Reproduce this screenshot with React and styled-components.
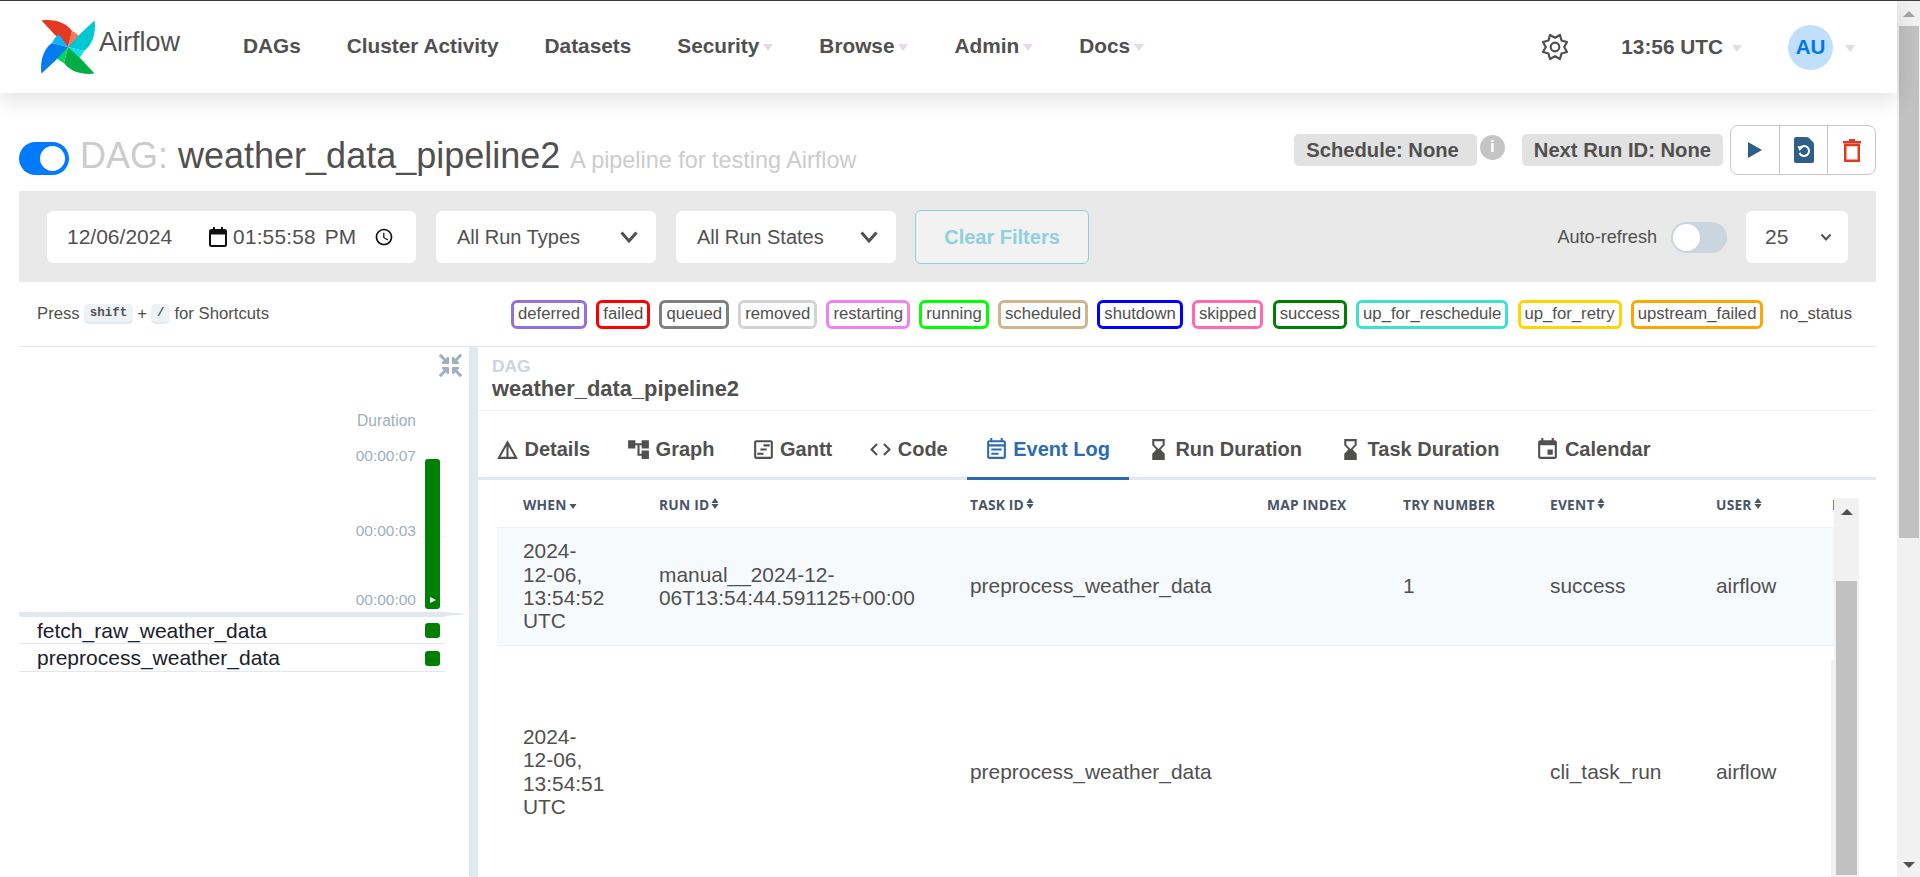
import React from 'react'
import styled, { createGlobalStyle } from 'styled-components'
import { FaCompressArrowsAlt } from 'react-icons/fa'
import {
  MdDetails, MdAccountTree, MdOutlineViewTimeline, MdCode, MdOutlineEventNote,
  MdHourglassBottom, MdEvent, MdAccessTime,
} from 'react-icons/md'

const GlobalStyle = createGlobalStyle`
  html, body { margin: 0; padding: 0; height: 100%; overflow: hidden; background: #fff; }
  * { box-sizing: border-box; }
  body { font-family: "Liberation Sans", Arial, sans-serif; color: #51504f; }
`
const Page = styled.div`
  display: flex;
  height: 877px;
  border-top: 1px solid #3c3c3c;
  overflow: hidden;
`
const Main = styled.div`
  flex: 1;
  min-width: 0;
  display: flex;
  flex-direction: column;
`
const PageBar = styled.div`
  width: 23px;
  background: #f1f1f1;
  display: flex;
  flex-direction: column;
  align-items: center;
`
const ArrowBox = styled.div`
  height: ${p => p.$h}px;
  display: flex;
  align-items: center;
  justify-content: center;
  flex: none;
  margin-top: ${p => (p.$end ? 'auto' : '0')};
`
const Arrow = styled.span`
  width: 0;
  height: 0;
  border-left: 6px solid transparent;
  border-right: 6px solid transparent;
  ${p => (p.$down ? 'border-top' : 'border-bottom')}: 6px solid ${p => p.$color};
`
const PageThumb = styled.div`
  width: 20px;
  height: 512px;
  background: #c1c1c1;
`
const Nav = styled.header`
  height: 92px;
  flex: none;
  background: #fff;
  display: flex;
  align-items: center;
  padding: 0 42px 0 41px;
  box-shadow: 0 6px 22px rgba(0,0,0,.13);
  position: relative;
  z-index: 2;
`
const Brand = styled.div`
  display: flex;
  align-items: center;
  width: 202px;
  flex: none;
  font-size: 27px;
  color: #51504f;
  & > span { margin: -9px 0 0 4px; }
`
const NavLinks = styled.nav`
  display: flex;
  gap: 46px;
  align-items: center;
  margin-top: -2px;
`
const NavLink = styled.a`
  font-size: 20.8px;
  font-weight: 700;
  color: #51504f;
  display: flex;
  align-items: center;
`
const Caret = styled.i`
  width: 0;
  height: 0;
  margin: 3px 0 0 4px;
  border-left: 5.5px solid transparent;
  border-right: 5.5px solid transparent;
  border-top: 7px solid #e4dae9;
`
const NavRight = styled.div`
  margin-left: auto;
  display: flex;
  align-items: center;
`
const GearSvg = styled.svg`
  margin-right: 52px;
  flex: none;
`
const Clock = styled(NavLink)`
  margin-right: 46px;
  & > i { margin-left: 9px; }
`
const Avatar = styled.div`
  width: 45px;
  height: 45px;
  border-radius: 50%;
  background: #bfdffb;
  color: #0077ee;
  font-size: 20.6px;
  font-weight: 700;
  display: flex;
  align-items: center;
  justify-content: center;
  margin-right: 8px;
`
const TitleRow = styled.div`
  height: 98px;
  flex: none;
  display: flex;
  align-items: flex-end;
  justify-content: space-between;
  padding: 0 21px 16px 19px;
`
const TitleLeft = styled.div`
  display: flex;
  align-items: flex-end;
`
const Toggle = styled.div`
  width: ${p => p.$w}px;
  height: ${p => p.$h}px;
  border-radius: ${p => p.$h / 2}px;
  background: ${p => p.$bg};
  padding: ${p => p.$pad}px;
  display: flex;
  justify-content: ${p => (p.$on ? 'flex-end' : 'flex-start')};
  flex: none;
  &::after {
    content: '';
    height: 100%;
    aspect-ratio: 1;
    border-radius: 50%;
    background: #fff;
  }
`
const Heading = styled.h1`
  margin: 0 0 -6px 11px;
  font-size: 36px;
  line-height: 41px;
  font-weight: 400;
  color: #51504f;
  white-space: nowrap;
`
const Muted = styled.span`
  color: #ccc;
`
const Subtitle = styled.small`
  font-size: 23.4px;
  color: #ccc;
  margin-left: 10px;
`
const TitleRight = styled.div`
  display: flex;
  align-items: center;
`
const InfoBadge = styled.span`
  height: 32px;
  padding: 0 ${p => p.$pr ?? 12}px 0 12px;
  display: flex;
  align-items: center;
  border-radius: 5px;
  background: #e2e2e2;
  font-size: 20.2px;
  font-weight: 700;
  color: #51504f;
  white-space: nowrap;
`
const InfoDot = styled.span`
  width: 25px;
  height: 25px;
  margin: -6px 17px 0 3px;
  border-radius: 50%;
  background: #c4c4c4;
  color: #fff;
  font-size: 17px;
  font-weight: 700;
  display: flex;
  align-items: center;
  justify-content: center;
`
const ButtonGroup = styled.div`
  display: flex;
  margin-left: 7px;
  height: 50px;
  border: 1px solid #c9c9c9;
  border-radius: 8px;
`
const GroupButton = styled.div`
  width: 48px;
  display: flex;
  align-items: center;
  justify-content: center;
  & + & { border-left: 1px solid #c9c9c9; }
`
const FilterBar = styled.div`
  height: 91px;
  flex: none;
  margin: 0 21px 0 19px;
  padding: 1px 28px 0;
  background: #e9e9e9;
  display: flex;
  align-items: center;
  gap: 20px;
`
const Field = styled.div`
  width: ${p => p.$w}px;
  height: 52px;
  flex: none;
  background: #fff;
  border-radius: 6px;
  display: flex;
  align-items: center;
  padding: 0 ${p => p.$pr ?? 18}px 0 ${p => p.$pl ?? 21}px;
  font-size: 20px;
  color: #51504f;
`
const DateText = styled.span`
  font-size: 21px;
  white-space: nowrap;
`
const CalendarSvg = styled.svg`
  margin-left: 37px;
  flex: none;
`
const TimeText = styled(DateText)`
  font-size: 20.8px;
  word-spacing: 3px;
  margin-left: 6px;
  letter-spacing: .2px;
`
const ClockIcon = styled(MdAccessTime)`
  margin-left: auto;
  color: #111;
`
const Chevron = styled.svg`
  margin-left: auto;
  flex: none;
`
const ClearButton = styled.div`
  width: 174px;
  height: 54px;
  flex: none;
  margin-left: -1px;
  border: 1px solid #8fd0de;
  border-radius: 6px;
  background: #f2f2f2;
  color: #8fd0de;
  font-size: 20px;
  font-weight: 700;
  display: flex;
  align-items: center;
  justify-content: center;
`
const RefreshGroup = styled.div`
  margin-left: auto;
  display: flex;
  align-items: center;
  font-size: 18.1px;
  color: #51504f;
  gap: 14px;
  & > div:last-child { margin-left: 5px; }
`
const LegendRow = styled.div`
  height: 65px;
  flex: none;
  margin: 0 21px 0 19px;
  padding: 0 17px 0 18px;
  border-bottom: 1px solid #e2e8f0;
  display: flex;
  align-items: center;
  font-size: 16.7px;
`
const Shortcut = styled.div`
  display: flex;
  align-items: center;
  gap: 4.5px;
`
const Kbd = styled.kbd`
  height: 20px;
  padding: 0 5.5px;
  display: flex;
  align-items: center;
  border-radius: 5px;
  background: #edf2f7;
  border-bottom: 2px solid #e2e8f0;
  font-family: "Liberation Mono", monospace;
  font-size: 12.5px;
  font-weight: 700;
  color: #51504f;
`
const Legend = styled.div`
  margin-left: auto;
  display: flex;
  gap: 9.2px;
`
const StateBadge = styled.span`
  height: 29px;
  padding: 0 4px;
  border: 3px solid ${p => p.$color};
  border-radius: 6px;
  display: flex;
  align-items: center;
  color: #51504f;
`
const Workspace = styled.div`
  flex: 1;
  min-height: 0;
  margin: 0 21px 0 19px;
  display: flex;
  overflow: hidden;
`
const LeftPanel = styled.aside`
  width: 450px;
  flex: none;
  display: flex;
  flex-direction: column;
`
const CollapseRow = styled.div`
  height: 31px;
  padding: 7px 7px 0 0;
  display: flex;
  justify-content: flex-end;
  color: #a0aec0;
`
const DurationLabel = styled.div`
  width: 397px;
  margin-top: 34px;
  line-height: 18px;
  font-size: 15.6px;
  color: #a0aec0;
  text-align: right;
`
const Axis = styled.div`
  position: relative;
  width: 426px;
  margin-top: 17px;
  height: 165px;
`
const TickRow = styled.div`
  display: flex;
  justify-content: flex-end;
  height: 18px;
  margin-top: ${p => p.$gap}px;
  font-size: 15.5px;
  line-height: 18px;
  color: #a0aec0;
`
const TickLine = styled.i`
  width: 24px;
  height: 1px;
  margin: 14px 0 0 5px;
  background: #edf2f7;
`
const DurationBar = styled.div`
  position: absolute;
  top: 12px;
  right: 5px;
  width: 15px;
  height: 150px;
  border-radius: 3px;
  background: #008000;
  display: flex;
  align-items: flex-end;
  justify-content: center;
  padding-bottom: 6px;
  &::after {
    content: '';
    margin-left: 1px;
    border-left: 6px solid #fff;
    border-top: 3.5px solid transparent;
    border-bottom: 3.5px solid transparent;
  }
`
const ChartRule = styled.div`
  position: relative;
  width: 426px;
  height: 5px;
  flex: none;
  background: #e2e8f0;
  &::after {
    content: '';
    position: absolute;
    left: 100%;
    top: 0;
    border-left: 23px solid #e2e8f0;
    border-top: 2.5px solid transparent;
    border-bottom: 2.5px solid transparent;
  }
`
const TaskRow = styled.div`
  width: 426px;
  height: ${p => p.$h}px;
  padding: 1px 5px 0 18px;
  border-bottom: 1px solid #e2e8f0;
  display: flex;
  align-items: center;
  justify-content: space-between;
  font-size: 21px;
  color: #1a202c;
  &::after {
    content: '';
    width: 15px;
    height: 15px;
    border-radius: 3px;
    background: #008000;
  }
`
const Splitter = styled.div`
  width: 9px;
  flex: none;
  background: #e2e8f0;
`
const RightPanel = styled.section`
  flex: 1;
  min-width: 0;
  display: flex;
  flex-direction: column;
`
const PanelHeader = styled.div`
  height: 64px;
  flex: none;
  padding: 10px 0 0 14px;
  border-bottom: 1px solid #edf2f7;
`
const Crumb = styled.div`
  font-size: 17.4px;
  font-weight: 700;
  line-height: 19px;
  color: #cbd5e0;
`
const CrumbName = styled.div`
  font-size: 21.9px;
  font-weight: 700;
  line-height: 26px;
  color: #51504f;
`
const Tabs = styled.div`
  height: 69px;
  flex: none;
  display: flex;
  border-bottom: 3px solid #e2e8f0;
`
const Tab = styled.div`
  height: 69px;
  padding: 13px 19px 3px 17px;
  display: flex;
  align-items: center;
  gap: 4.5px;
  font-size: 20px;
  font-weight: 700;
  color: ${p => (p.$active ? '#2b6cb0' : '#51504f')};
  border-bottom: 3px solid ${p => (p.$active ? '#2b6cb0' : 'transparent')};
  white-space: nowrap;
`
const TableArea = styled.div`
  flex: 1;
  min-height: 0;
  display: flex;
  padding-left: 19px;
`
const TableClip = styled.div`
  width: 1337px;
  flex: none;
  overflow: hidden;
`
const Table = styled.table`
  width: 1365px;
  table-layout: fixed;
  border-collapse: collapse;
`
const Th = styled.th`
  height: 47px;
  padding: 3px 0 0 26px;
  text-align: left;
  border-bottom: 1px solid #edf2f7;
  font-family: "Open Sans", sans-serif;
  font-size: 13.8px;
  font-weight: 700;
  color: #4a5568;
  white-space: nowrap;
  letter-spacing: .2px;
`
const Td = styled.td`
  padding: 0 0 0 26px;
  font-size: 20.9px;
  line-height: 23.4px;
  color: #51504f;
  vertical-align: middle;
`
const Tr = styled.tr`
  height: ${p => p.$h}px;
  background: ${p => (p.$tint ? '#f7fafc' : '#fff')};
  border-bottom: 1px solid #edf2f7;
`
const WhenText = styled.div`
  width: 82px;
`
const RunText = styled.div`
  width: 263px;
`
const SortIcon = styled.svg`
  margin-left: 2px;
  vertical-align: 1px;
`
const InnerBar = styled.div`
  position: relative;
  width: 25px;
  flex: none;
  margin-top: 18px;
  background: #f1f1f1;
  display: flex;
  flex-direction: column;
  align-items: center;
  &::before {
    content: '';
    position: absolute;
    left: -3px;
    width: 3px;
    top: 162px;
    bottom: 0;
    background: #f1f1f1;
  }
`
const InnerThumb = styled.div`
  width: 21px;
  height: 294px;
  margin-top: 55px;
  background: #c1c1c1;
`

function AirflowLogo() {
  const blades = [
    ['#e43921', '#ff7557', 0],
    ['#00c7d4', '#11e1ee', 90],
    ['#00ad46', '#04d659', 180],
    ['#017cee', '#0cb6ff', 270],
  ]
  return (
    <svg width="54" height="54" viewBox="0 0 54 54">
      {blades.map(([dark, light, turn]) => (
        <g key={turn} transform={`rotate(${turn} 27 27)`}>
          <path d="M0.5 0.5C10 -1 24 1 31 11L27 27L14 15Z" fill={dark} />
          <path d="M31 11C35 13 38 15 39.500 18L27 27Z" fill={light} />
        </g>
      ))}
    </svg>
  )
}

function GearIcon() {
  // eight teeth, set a half step off the vertical
  const points = Array.from({ length: 16 }, (_, i) => {
    const angle = ((i * 22.5 + 22.5) * Math.PI) / 180
    const r = i % 2 === 0 ? 13 : 9.2
    return `${(14 + r * Math.sin(angle)).toFixed(2)},${(14 - r * Math.cos(angle)).toFixed(2)}`
  })
  return (
    <GearSvg width="28" height="28" viewBox="0 0 28 28" fill="none" stroke="#51504f" strokeWidth="2.2" strokeLinejoin="round">
      <polygon points={points.join(' ')} />
      <circle cx="14" cy="14" r="4.300" />
    </GearSvg>
  )
}

function Sort({ only }) {
  return (
    <SortIcon width="8" height="11" viewBox="0 0 8 11" fill="#4a5568">
      {!only && <path d="M4 0L7.500 5H0.500Z" />}
      <path d="M4 11L7.500 6H0.500Z" />
    </SortIcon>
  )
}

function SelectChevron() {
  return (
    <Chevron width="18" height="12" viewBox="0 0 18 12" fill="none" stroke="#51504f" strokeWidth="3">
      <path d="M1.500 1.500L9 10L16.500 1.500" />
    </Chevron>
  )
}

const states = [
  ['deferred', '#9370db'], ['failed', '#ff0000'], ['queued', '#808080'], ['removed', '#d3d3d3'],
  ['restarting', '#ee82ee'], ['running', '#00ff00'], ['scheduled', '#d2b48c'], ['shutdown', '#0000ff'],
  ['skipped', '#ff69b4'], ['success', '#008000'], ['up_for_reschedule', '#40e0d0'],
  ['up_for_retry', '#ffd700'], ['upstream_failed', '#ffa500'], ['no_status', 'transparent'],
]

const tabs = [
  ['Details', MdDetails],
  ['Graph', MdAccountTree],
  ['Gantt', MdOutlineViewTimeline],
  ['Code', MdCode],
  ['Event Log', MdOutlineEventNote, true],
  ['Run Duration', MdHourglassBottom],
  ['Task Duration', MdHourglassBottom],
  ['Calendar', MdEvent],
]

export default function App() {
  return (
    <Page>
      <GlobalStyle />
      <Main>
        <Nav>
          <Brand>
            <AirflowLogo />
            <span>Airflow</span>
          </Brand>
          <NavLinks>
            <NavLink>DAGs</NavLink>
            <NavLink>Cluster Activity</NavLink>
            <NavLink>Datasets</NavLink>
            <NavLink>Security<Caret /></NavLink>
            <NavLink>Browse<Caret /></NavLink>
            <NavLink>Admin<Caret /></NavLink>
            <NavLink>Docs<Caret /></NavLink>
          </NavLinks>
          <NavRight>
            <GearIcon />
            <Clock>13:56 UTC<Caret /></Clock>
            <Avatar>AU</Avatar>
            <Caret />
          </NavRight>
        </Nav>

        <TitleRow>
          <TitleLeft>
            <Toggle $w={50} $h={33} $bg="#007bff" $pad={4} $on />
            <Heading>
              <Muted>DAG: </Muted>weather_data_pipeline2
              <Subtitle>A pipeline for testing Airflow</Subtitle>
            </Heading>
          </TitleLeft>
          <TitleRight>
            <InfoBadge $pr={18}>Schedule: None</InfoBadge>
            <InfoDot>i</InfoDot>
            <InfoBadge>Next Run ID: None</InfoBadge>
            <ButtonGroup>
              <GroupButton>
                <svg width="14" height="16" viewBox="0 0 14 16"><path d="M0 0L14 8L0 16Z" fill="#2f5f88" /></svg>
              </GroupButton>
              <GroupButton>
                <svg width="20" height="26" viewBox="0 0 20 26">
                  <path d="M2 0H12Q14 0 15 1L19 5Q20 6 20 8V24Q20 26 18 26H2Q0 26 0 24V2Q0 0 2 0Z" fill="#2f5f88" />
                  <path d="M6 11A5 5 0 1 1 5.500 16" fill="none" stroke="#fff" strokeWidth="2" />
                  <path d="M3.500 9L9.500 10L5.500 14Z" fill="#fff" />
                </svg>
              </GroupButton>
              <GroupButton>
                <svg width="18" height="23" viewBox="0 0 18 23">
                  <path d="M6 0H12V2H18V4.500H0V2H6Z" fill="#e43921" />
                  <rect x="2.250" y="6" width="13.500" height="15.750" fill="none" stroke="#e43921" strokeWidth="2.500" />
                </svg>
              </GroupButton>
            </ButtonGroup>
          </TitleRight>
        </TitleRow>

        <FilterBar>
          <Field $w={369} $pl={20} $pr={22}>
            <DateText>12/06/2024</DateText>
            <CalendarSvg width="18" height="20" viewBox="0 0 18 20" fill="none" stroke="#111" strokeWidth="2">
              <rect x="1" y="3" width="16" height="16" rx="1.500" />
              <path d="M1 5.500H17" strokeWidth="4" />
              <path d="M5 0V3M13 0V3" />
            </CalendarSvg>
            <TimeText>01:55:58 PM</TimeText>
            <ClockIcon size={20} />
          </Field>
          <Field $w={220}>
            All Run Types
            <SelectChevron />
          </Field>
          <Field $w={220}>
            All Run States
            <SelectChevron />
          </Field>
          <ClearButton>Clear Filters</ClearButton>
          <RefreshGroup>
            Auto-refresh
            <Toggle $w={56} $h={31} $bg="#cbd5e0" $pad={2} />
            <Field $w={102} $pl={19} $pr={16}>
              <DateText>25</DateText>
              <Chevron width="12" height="8" viewBox="0 0 12 8" fill="none" stroke="#51504f" strokeWidth="2">
                <path d="M1.500 1.500L6 6.500L10.500 1.500" />
              </Chevron>
            </Field>
          </RefreshGroup>
        </FilterBar>

        <LegendRow>
          <Shortcut>
            Press <Kbd>shift</Kbd> + <Kbd>/</Kbd> for Shortcuts
          </Shortcut>
          <Legend>
            {states.map(([name, color]) => (
              <StateBadge key={name} $color={color}>{name}</StateBadge>
            ))}
          </Legend>
        </LegendRow>

        <Workspace>
          <LeftPanel>
            <CollapseRow><FaCompressArrowsAlt size={23} /></CollapseRow>
            <DurationLabel>Duration</DurationLabel>
            <Axis>
              <TickRow $gap={0}>00:00:07<TickLine /></TickRow>
              <TickRow $gap={57}>00:00:03<TickLine /></TickRow>
              <TickRow $gap={51}>00:00:00<TickLine /></TickRow>
              <DurationBar />
            </Axis>
            <ChartRule />
            <TaskRow $h={27}>fetch_raw_weather_data</TaskRow>
            <TaskRow $h={28}>preprocess_weather_data</TaskRow>
          </LeftPanel>
          <Splitter />
          <RightPanel>
            <PanelHeader>
              <Crumb>DAG</Crumb>
              <CrumbName>weather_data_pipeline2</CrumbName>
            </PanelHeader>
            <Tabs>
              {tabs.map(([label, Icon, active]) => (
                <Tab key={label} $active={active}>
                  <Icon size={25} />
                  {label}
                </Tab>
              ))}
            </Tabs>
            <TableArea>
              <TableClip>
                <Table>
                  <colgroup>
                    <col width="136" /><col width="311" /><col width="297" /><col width="136" />
                    <col width="147" /><col width="166" /><col width="116" /><col width="56" />
                  </colgroup>
                  <thead>
                    <tr>
                      <Th>WHEN<Sort only /></Th>
                      <Th>RUN ID<Sort /></Th>
                      <Th>TASK ID<Sort /></Th>
                      <Th>MAP INDEX</Th>
                      <Th>TRY NUMBER</Th>
                      <Th>EVENT<Sort /></Th>
                      <Th>USER<Sort /></Th>
                      <Th>EXTRA</Th>
                    </tr>
                  </thead>
                  <tbody>
                    <Tr $h={118} $tint>
                      <Td><WhenText>2024-12-06, 13:54:52 UTC</WhenText></Td>
                      <Td><RunText>manual__2024-12-06T13:54:44.591125+00:00</RunText></Td>
                      <Td>preprocess_weather_data</Td>
                      <Td />
                      <Td>1</Td>
                      <Td>success</Td>
                      <Td>airflow</Td>
                      <Td />
                    </Tr>
                    <Tr $h={253}>
                      <Td><WhenText>2024-12-06, 13:54:51 UTC</WhenText></Td>
                      <Td />
                      <Td>preprocess_weather_data</Td>
                      <Td />
                      <Td />
                      <Td>cli_task_run</Td>
                      <Td>airflow</Td>
                      <Td />
                    </Tr>
                  </tbody>
                </Table>
              </TableClip>
              <InnerBar>
                <ArrowBox $h={28}><Arrow $color="#505050" /></ArrowBox>
                <InnerThumb />
              </InnerBar>
            </TableArea>
          </RightPanel>
        </Workspace>
      </Main>
      <PageBar>
        <ArrowBox $h={25}><Arrow $color="#a3a3a3" /></ArrowBox>
        <PageThumb />
        <ArrowBox $h={24} $end><Arrow $down $color="#505050" /></ArrowBox>
      </PageBar>
    </Page>
  )
}
